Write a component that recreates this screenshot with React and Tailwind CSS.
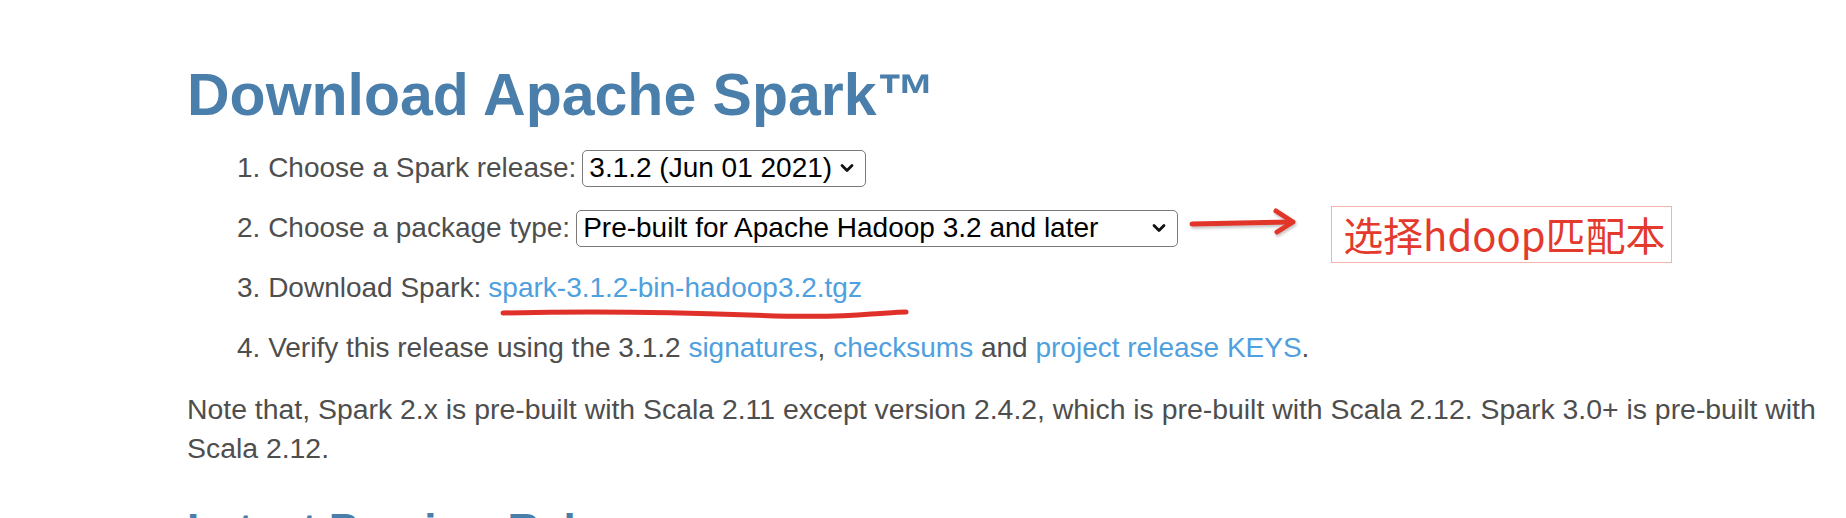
import React from 'react';

const sans = { fontFamily: '"Liberation Sans", Arial, Helvetica, sans-serif' };

const Chevron = ({ className = '' }) => (
  <svg className={className} width="14" height="10" viewBox="0 0 14 10" fill="none">
    <path d="M2 2.5l5 5 5-5" stroke="#111" strokeWidth="2.8" strokeLinecap="round" strokeLinejoin="round" />
  </svg>
);

const FakeSelect = ({ children, width }) => (
  <div
    className={`inline-flex items-center justify-between h-[37px] ${width} border-[1.5px] border-[#7a7a7a] rounded-[5px] bg-white pl-[6px] pr-[11px] text-black`}
  >
    <span className="whitespace-nowrap">{children}</span>
    <Chevron />
  </div>
);

const A = ({ children }) => <a className="text-[#4fa0de] cursor-pointer">{children}</a>;

export default function App() {
  return (
    <div className="w-[1846px] h-[518px] overflow-hidden bg-white pl-[187px] pt-[65px]" style={sans}>
      <h1 className="text-[59px] leading-[60px] font-bold text-[#4a7eab]">Download Apache Spark™</h1>

      <ol className="mt-[13px] text-[28px] text-[#4e4e4e]">
        <li className="h-[60px] flex items-center gap-[6px] pl-[50px]">
          <span>1. Choose a Spark release:</span>
          <FakeSelect width="w-[284px]">3.1.2 (Jun 01 2021)</FakeSelect>
        </li>

        <li className="h-[60px] flex items-center gap-[6px] pl-[50px]">
          <span>2. Choose a package type:</span>
          <FakeSelect width="w-[602px]">Pre-built for Apache Hadoop 3.2 and later</FakeSelect>
          {/* red arrow annotation */}
          <svg className="ml-[4px] mt-[-14px]" width="112" height="34" viewBox="0 0 112 34" fill="none">
            <defs>
              <filter id="sh" x="-10%" y="-30%" width="120%" height="160%">
                <feDropShadow dx="1" dy="2" stdDeviation="1.5" floodColor="#000" floodOpacity="0.25" />
              </filter>
            </defs>
            <g filter="url(#sh)" stroke="#e2352a" strokeWidth="5" strokeLinecap="round" strokeLinejoin="round">
              <path d="M4 20 L104 18" />
              <path d="M88 7 L105 18 L89 28" />
            </g>
          </svg>
          <div className="ml-[25px] mt-[12px] h-[57px] w-[341px] border border-[#f3b3ad] flex items-center pl-[11px]">
            <span
              className="text-[40px] leading-none text-[#e43a2e] whitespace-nowrap"
              style={{ fontFamily: '"Noto Sans CJK SC", "Noto Sans", sans-serif' }}
            >
              选择hdoop匹配本
            </span>
          </div>
        </li>

        <li className="h-[60px] flex items-center gap-[7px] pl-[50px]">
          <span>3. Download Spark:</span>
          <span className="relative">
            <A>spark-3.1.2-bin-hadoop3.2.tgz</A>
            {/* hand-drawn underline */}
            <svg className="absolute left-[11px] top-[41px]" width="412" height="14" viewBox="0 0 412 14" fill="none">
              <path
                d="M4 5 C90 3 170 4 250 7 C300 9 340 9 372 6 C388 5 400 4 407 4"
                stroke="#e0302a"
                strokeWidth="5"
                strokeLinecap="round"
              />
            </svg>
          </span>
        </li>

        <li className="h-[60px] flex items-center pl-[50px]">
          <span>
            4. Verify this release using the 3.1.2 <A>signatures</A>, <A>checksums</A> and{' '}
            <A>project release KEYS</A>.
          </span>
        </li>
      </ol>

      <p className="mt-[12px] w-[1650px] text-[28.4px] leading-[39px] text-[#4e4e4e]">
        Note that, Spark 2.x is pre-built with Scala 2.11 except version 2.4.2, which is pre-built with Scala 2.12.
        Spark 3.0+ is pre-built with Scala 2.12.
      </p>

      <h2 className="mt-[40px] text-[44px] leading-[44px] font-bold text-[#4a7eab]">Latest Preview Release</h2>
    </div>
  );
}
